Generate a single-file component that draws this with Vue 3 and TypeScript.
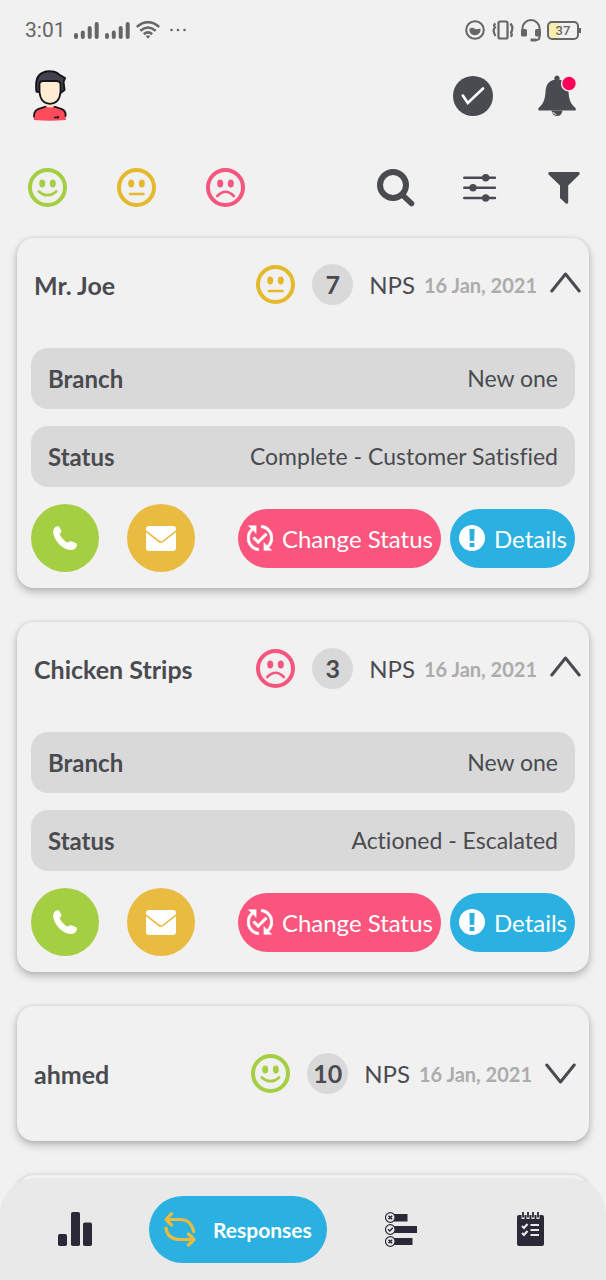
<script setup lang="ts">
import { ref } from 'vue'

type Mood = 'happy' | 'neutral' | 'sad'

interface FeedbackResponse {
  id: number
  name: string
  mood: Mood
  score: number
  date: string
  branch: string
  status: string
  open: boolean
}

const moods: Mood[] = ['happy', 'neutral', 'sad']

const responses = ref<FeedbackResponse[]>([
  { id: 1, name: 'Mr. Joe', mood: 'neutral', score: 7, date: '16 Jan, 2021', branch: 'New one', status: 'Complete - Customer Satisfied', open: true },
  { id: 2, name: 'Chicken Strips', mood: 'sad', score: 3, date: '16 Jan, 2021', branch: 'New one', status: 'Actioned - Escalated', open: true },
  { id: 3, name: 'ahmed', mood: 'happy', score: 10, date: '16 Jan, 2021', branch: 'New one', status: 'Complete - Customer Satisfied', open: false },
])
</script>

<template>
  <div class="screen">
    <svg class="sprite" aria-hidden="true">
      <symbol id="face-happy" viewBox="0 0 39 39">
        <circle cx="19.500" cy="19.500" r="17.500" fill="none" stroke="currentColor" stroke-width="4" />
        <ellipse cx="14.200" cy="15.500" rx="3" ry="3.900" fill="currentColor" />
        <ellipse cx="24.800" cy="15.500" rx="3" ry="3.900" fill="currentColor" />
        <path d="M10.800 23.400Q19.500 31 28.200 23.400" fill="none" stroke="currentColor" stroke-width="2.600" stroke-linecap="round" />
      </symbol>
      <symbol id="face-neutral" viewBox="0 0 39 39">
        <circle cx="19.500" cy="19.500" r="17.500" fill="none" stroke="currentColor" stroke-width="4" />
        <ellipse cx="14.200" cy="15.500" rx="3" ry="3.900" fill="currentColor" />
        <ellipse cx="24.800" cy="15.500" rx="3" ry="3.900" fill="currentColor" />
        <path d="M13 26H26.500" fill="none" stroke="currentColor" stroke-width="2.600" stroke-linecap="round" />
      </symbol>
      <symbol id="face-sad" viewBox="0 0 39 39">
        <circle cx="19.500" cy="19.500" r="17.500" fill="none" stroke="currentColor" stroke-width="4" />
        <ellipse cx="14.200" cy="15.500" rx="3" ry="3.900" fill="currentColor" />
        <ellipse cx="24.800" cy="15.500" rx="3" ry="3.900" fill="currentColor" />
        <path d="M11.300 28Q19.500 19.500 27.800 28" fill="none" stroke="currentColor" stroke-width="2.600" stroke-linecap="round" />
      </symbol>
      <symbol id="signal" viewBox="0 0 25 17">
        <path d="M2 13V15M8.800 10.500V15M15.700 6V15M22.700 2V15" fill="none" stroke="currentColor" stroke-width="4" stroke-linecap="round" />
      </symbol>
    </svg>

    <header class="status-bar">
      <div class="status-group">
        <span class="clock">3:01</span>
        <svg class="signal" aria-hidden="true"><use href="#signal" /></svg>
        <svg class="signal" aria-hidden="true"><use href="#signal" /></svg>
        <svg class="wifi" viewBox="0 0 24 18" aria-hidden="true">
          <g fill="none" stroke="currentColor" stroke-width="2.600">
            <path d="M.8 6Q12-3.500 23.200 6" />
            <path d="M4.300 9.700Q12 3.300 19.700 9.700" />
            <path d="M7.800 13.200Q12 9.700 16.200 13.200" />
          </g>
          <path d="M9.800 15Q12 13.600 14.200 15L12 17.800Z" fill="currentColor" />
        </svg>
        <svg class="more" viewBox="0 0 16 4" fill="currentColor" aria-hidden="true">
          <circle cx="1.500" cy="2" r="1.300" /><circle cx="8" cy="2" r="1.300" /><circle cx="14.500" cy="2" r="1.300" />
        </svg>
      </div>
      <div class="status-group">
        <svg class="eye" viewBox="0 0 20 20" aria-hidden="true">
          <circle cx="10" cy="10" r="8.800" fill="none" stroke="currentColor" stroke-width="2" />
          <path d="M4.500 9C6.500 7 8.500 8 10.500 9.200C12.500 9.200 14 8.500 15.500 8.800C16 12.500 13.500 15.200 10 15.200C6.500 15.200 4 12.500 4.500 9Z" fill="currentColor" />
        </svg>
        <svg class="vibrate" viewBox="0 0 24 20" fill="none" stroke="currentColor" stroke-width="2.200" aria-hidden="true">
          <rect x="7.500" y="1.500" width="9" height="17" rx="1.500" />
          <path d="M4.500 3.500Q2 5 4 7.500Q1 10.500 4.500 16M19.500 16.500Q22 15 20 12.500Q23 8 19.500 3.500" />
        </svg>
        <svg class="headset" viewBox="0 0 20 24" aria-hidden="true">
          <path d="M1.500 14V10.500A8.500 8.500 0 0 1 18.500 10.500V19Q18.500 22 15 22H11" fill="none" stroke="currentColor" stroke-width="2" />
          <rect x="0" y="11" width="6" height="7.500" rx="1.500" fill="currentColor" />
          <rect x="14" y="11" width="6" height="7.500" rx="1.500" fill="currentColor" />
          <rect x="9.500" y="20.500" width="6" height="3" rx="1" fill="currentColor" />
        </svg>
        <span class="battery">37</span>
      </div>
    </header>

    <div class="top-bar">
      <button class="icon-button" type="button" aria-label="Profile">
        <svg class="avatar" viewBox="0 0 36 52" aria-hidden="true">
          <path d="M2 50Q-.5 40 9 38L14 36.500H22L27 38Q36.500 40 33.500 47L34 50Q18 51.500 2 50Z" fill="#ff4b5c" />
          <path d="M2 46.500Q1.500 39.800 9 38.200L14 36.500M22 36.500L27 38.200Q34.500 39.800 33.500 46" fill="none" stroke="#15151c" stroke-width="1.800" stroke-linecap="round" />
          <path d="M14 31H22V36.500Q18 38.500 14 36.500Z" fill="#ffdfba" />
          <path d="M6.500 22L4.500 21.500Q3 10 7 5.500Q11 .8 18.500 1.200Q24 1.200 27 4.500L33 8.200L31.500 12L32.500 20L28.500 23Z" fill="#41424d" stroke="#15151c" stroke-width="2" stroke-linejoin="round" />
          <path d="M7.500 13.500Q8 11 11 11H24.500Q28 11 28.500 14V22Q27.500 33.500 18 33.800Q8.500 33.500 7.500 22Z" fill="#ffecd3" stroke="#15151c" stroke-width="1.800" />
          <path d="M22 47.500H27M26 46V48.500" stroke="#15151c" stroke-width="1.600" />
        </svg>
      </button>
      <div class="top-actions">
        <button class="icon-button" type="button" aria-label="Mark all as done">
          <svg class="done" viewBox="0 0 40 40" aria-hidden="true">
            <circle cx="20" cy="20" r="20" fill="currentColor" />
            <path d="M9.800 19.500L14.800 27L30 12.500" fill="none" stroke="#fff" stroke-width="2.600" stroke-linecap="round" />
          </svg>
        </button>
        <button class="icon-button" type="button" aria-label="Notifications">
          <svg class="bell" viewBox="0 0 40 42" aria-hidden="true">
            <path d="M13.500 35.500H24.500Q23.500 41 19 41Q14.500 41 13.500 35.500Z" fill="currentColor" />
            <path d="M14.800 37Q16 39.500 18.500 39.500" fill="none" stroke="#f1f1f1" stroke-width="1.100" />
            <path d="M16.800 4.500A2.600 2.600 0 1 1 21.200 4.500C28 6 30.300 11 30.500 17C31 25 33 29 37 32.500Q38.500 34 37.500 35.500H.7Q-.3 34 1 32.500C5 29 7 25 7.500 17C7.700 11 10 6 16.800 4.500Z" fill="currentColor" />
            <circle cx="31" cy="8.500" r="7.400" fill="#ff0059" stroke="#f1f1f1" stroke-width="1.400" />
          </svg>
        </button>
      </div>
    </div>

    <div class="tools">
      <div class="mood-filters">
        <button v-for="mood in moods" :key="mood" class="icon-button" type="button" :aria-label="`Show ${mood} responses`">
          <svg class="face" :class="mood" aria-hidden="true"><use :href="`#face-${mood}`" /></svg>
        </button>
      </div>
      <div class="list-tools">
        <button class="icon-button tool" type="button" aria-label="Search">
          <svg class="search" viewBox="0 0 38 38" fill="none" stroke="currentColor" aria-hidden="true">
            <circle cx="16" cy="16" r="13" stroke-width="6" />
            <path d="M26 26.500L34.500 34.500" stroke-width="5.600" stroke-linecap="round" />
          </svg>
        </button>
        <button class="icon-button tool" type="button" aria-label="Adjust view">
          <svg class="sliders" viewBox="0 0 34 28" fill="currentColor" stroke="currentColor" aria-hidden="true">
            <path d="M1.200 3.700H32M1.200 13.800H32M1.200 24H32" stroke-width="2.400" stroke-linecap="round" />
            <g stroke="none"><circle cx="22.700" cy="3.700" r="3.700" /><circle cx="10" cy="13.800" r="3.700" /><circle cx="22.700" cy="24" r="3.700" /></g>
          </svg>
        </button>
        <button class="icon-button tool" type="button" aria-label="Filter">
          <svg class="funnel" viewBox="0 0 32 32" fill="currentColor" aria-hidden="true">
            <path d="M1.200 0H30.800Q32.500 .8 31 3L20.200 13.500V30.500Q19.500 32.500 17.800 31.500L12 26V13.500L1 3Q-.5 .8 1.200 0Z" />
          </svg>
        </button>
      </div>
    </div>

    <main class="list">
      <article v-for="item in responses" :key="item.id" class="card" :class="{ open: item.open }">
        <div class="card-head">
          <h2 class="name">{{ item.name }}</h2>
          <svg class="face" :class="item.mood" role="img" :aria-label="item.mood"><use :href="`#face-${item.mood}`" /></svg>
          <span class="score">{{ item.score }}</span>
          <span class="metric">NPS</span>
          <time class="date">{{ item.date }}</time>
          <button class="icon-button" type="button" :aria-expanded="item.open" aria-label="Toggle details" @click="item.open = !item.open">
            <svg class="chevron" viewBox="0 0 31 21" aria-hidden="true">
              <path :d="item.open ? 'M1.800 19L15.500 2L29.200 19' : 'M1.800 2L15.500 19L29.200 2'" fill="none" stroke="currentColor" stroke-width="3" stroke-linecap="round" stroke-linejoin="round" />
            </svg>
          </button>
        </div>
        <template v-if="item.open">
          <dl class="facts">
            <div class="fact"><dt>Branch</dt><dd>{{ item.branch }}</dd></div>
            <div class="fact"><dt>Status</dt><dd>{{ item.status }}</dd></div>
          </dl>
          <div class="actions">
            <div class="contact">
              <button class="round call" type="button" aria-label="Call">
                <svg class="phone" viewBox="0 0 24 24" fill="currentColor" aria-hidden="true">
                  <path d="M1 2.500C2.500 .5 4.800-.2 6 .6L8.300 4.500C8.800 6 7.500 7 6.800 7.700C7.300 10.500 11.500 15.200 14.800 16.800C16 15.500 17.500 15 18.700 15.400L22.900 17C24.500 18.200 24.200 20.500 22.300 22.500C18.500 25.500 12.500 23.800 7.500 19.500C2.500 14.500-1.500 7.500 1 2.500Z" />
                </svg>
              </button>
              <button class="round mail" type="button" aria-label="Email">
                <svg class="envelope" viewBox="0 0 30 25" aria-hidden="true">
                  <rect width="30" height="25" rx="3" fill="currentColor" />
                  <path d="M-1 4.500L12.500 15Q15 17 17.500 15L31 4.500" fill="none" stroke="#e9bb40" stroke-width="1.600" />
                </svg>
              </button>
            </div>
            <button class="pill change" type="button">
              <svg class="pill-icon" viewBox="2 2 20 20" fill="currentColor" stroke="currentColor" stroke-width=".4" aria-hidden="true">
                <path d="M17.660 9.530l-7.070 7.070-4.240-4.240 1.410-1.410 2.830 2.830 5.660-5.660 1.410 1.410zM4 12c0-2.330 1.020-4.420 2.620-5.880L9 8.500v-6H3l2.200 2.200C3.240 6.520 2 9.110 2 12c0 5.190 3.950 9.450 9 9.950v-2.020c-3.940-.49-7-3.860-7-7.930zm18 0c0-5.190-3.950-9.450-9-9.950v2.020c3.940.49 7 3.860 7 7.930 0 2.330-1.020 4.420-2.620 5.880L15 15.500v6h6l-2.200-2.200c1.960-1.820 3.200-4.410 3.200-7.300z" />
              </svg>
              Change Status
            </button>
            <button class="pill details" type="button">
              <svg class="pill-icon" viewBox="0 0 26 26" aria-hidden="true">
                <circle cx="13" cy="13" r="13" fill="currentColor" />
                <path d="M10.400 4H15.600L15.200 16H10.800ZM10.600 18H15.400V22H10.600Z" fill="#2ab1e1" />
              </svg>
              Details
            </button>
          </div>
        </template>
      </article>
      <article class="card" aria-hidden="true"><div class="card-head"></div></article>
    </main>

    <nav class="tab-bar">
      <a class="tab" href="#dashboard" aria-label="Dashboard">
        <svg class="bars" viewBox="0 0 34 34" fill="currentColor" aria-hidden="true">
          <rect y="22" width="9" height="12" rx="1.800" /><rect x="13" width="9" height="34" rx="1.800" /><rect x="25" y="10.500" width="9" height="23.500" rx="1.800" />
        </svg>
      </a>
      <a class="tab active" href="#responses" aria-current="page">
        <span class="tab-pill">
          <svg class="cycle" viewBox="0 0 32 35" fill="none" stroke="currentColor" stroke-width="3.200" stroke-linecap="round" stroke-linejoin="round" aria-hidden="true">
            <path d="M7.500 1.700L2 7.500L7.500 13M2.500 7.500H17Q27 8 29.700 19.500" />
            <path d="M24.500 22L30 27.500L24.500 33M29.500 27.500H15Q3.500 27 2 16" />
          </svg>
          Responses
        </span>
      </a>
      <a class="tab" href="#surveys" aria-label="Surveys">
        <svg class="poll" viewBox="0 0 32 35" aria-hidden="true">
          <path d="M9 2H22.500V9.500H9ZM9 14H32V21H9ZM9 26H27.500V33H9Z" fill="currentColor" />
          <g fill="#e9e9e9" stroke="currentColor" stroke-width="1.200">
            <circle cx="5.300" cy="5.500" r="4.800" /><circle cx="5.300" cy="17.500" r="4.800" /><circle cx="5.300" cy="29.500" r="4.800" />
          </g>
          <g fill="none" stroke="currentColor" stroke-width="1.500">
            <path d="M3.500 3.700L7.100 7.300M7.100 3.700L3.500 7.300M3 17.300L4.800 19L7.800 15.800M3.500 27.700L7.100 31.300M7.100 27.700L3.500 31.300" />
          </g>
        </svg>
      </a>
      <a class="tab" href="#tasks" aria-label="Tasks">
        <svg class="notepad" viewBox="0 0 27 35" aria-hidden="true">
          <rect y="3" width="27" height="31" rx="2" fill="currentColor" />
          <path d="M6 0V7M11 0V7M16 0V7M21 0V7" stroke="#e9e9e9" stroke-width="3" />
          <path d="M6 0V5.500M11 0V5.500M16 0V5.500M21 0V5.500" stroke="currentColor" stroke-width="1.800" />
          <path d="M5 14L7 16L10.500 12M5 21L7 23L10.500 19" fill="none" stroke="#e9e9e9" stroke-width="2.200" />
          <path d="M13.500 13H22M13.500 18H22M13.500 23H22" stroke="#e9e9e9" stroke-width="2" />
        </svg>
      </a>
    </nav>
  </div>
</template>

<style>
body {
  margin: 0;
  background: #f1f1f1;
}
</style>

<style scoped>
.screen {
  display: flex;
  flex-direction: column;
  height: 100vh;
  overflow: hidden;
  background: #f1f1f1;
  color: #4a4b50;
  font-family: Lato, "Liberation Sans", sans-serif;
  font-variant-ligatures: no-common-ligatures;
}
.sprite {
  display: none;
}
svg {
  display: block;
  flex: none;
}
button {
  font: inherit;
  border: 0;
  cursor: pointer;
}
.icon-button {
  padding: 0;
  background: none;
  color: inherit;
}

.status-bar {
  display: flex;
  flex: none;
  justify-content: space-between;
  align-items: center;
  height: 60px;
  padding: 0 27px 0 25px;
  color: #666;
  font-family: Roboto, sans-serif;
}
.status-group {
  display: flex;
  align-items: center;
  gap: 6px;
}
.clock {
  font-size: 21px;
  line-height: 24px;
  margin-right: 2px;
}
.signal {
  width: 25px;
  height: 17px;
}
.wifi {
  width: 24px;
  height: 18px;
}
.more {
  width: 16px;
  height: 4px;
  margin-left: 4px;
}
.eye {
  width: 20px;
  height: 20px;
}
.vibrate {
  width: 24px;
  height: 20px;
}
.headset {
  width: 20px;
  height: 24px;
}
.battery {
  position: relative;
  width: 28px;
  border: 2px solid #666;
  border-radius: 5px;
  background: linear-gradient(90deg, #f6eeb0 35%, transparent 35%);
  font-size: 13px;
  font-weight: 500;
  line-height: 15px;
  text-align: center;
}
.battery::after {
  content: "";
  position: absolute;
  top: 5px;
  right: -4px;
  width: 2px;
  height: 5px;
  background: #666;
}

.top-bar {
  display: flex;
  flex: none;
  justify-content: space-between;
  align-items: center;
  height: 72px;
  padding: 0 28px 0 32px;
}
.top-actions {
  display: flex;
  align-items: center;
  gap: 45px;
}
.avatar {
  width: 36px;
  height: 52px;
}
.done {
  width: 40px;
  height: 40px;
}
.bell {
  width: 40px;
  height: 42px;
}

.tools {
  display: flex;
  flex: none;
  justify-content: space-between;
  align-items: center;
  padding: 36px 23px 31px 28px;
}
.mood-filters {
  display: flex;
  gap: 50px;
}
.list-tools {
  display: flex;
  align-items: center;
  gap: 46px;
}
.tool {
  display: grid;
  place-items: center;
  width: 38px;
  height: 38px;
}
.face {
  width: 39px;
  height: 39px;
}
.happy {
  color: #a5cf43;
}
.neutral {
  color: #e5b92c;
}
.sad {
  color: #f5567d;
}
.search {
  width: 38px;
  height: 38px;
}
.sliders {
  width: 34px;
  height: 28px;
}
.funnel {
  width: 32px;
  height: 32px;
}

.list {
  display: flex;
  flex: none;
  flex-direction: column;
  gap: 34px;
  padding: 0 17px;
}
.card {
  padding: 0 14px;
  border-radius: 17px;
  background: #f1f1f1;
  box-shadow: 0 4px 8px rgba(0, 0, 0, 0.24), 0 0 4px rgba(0, 0, 0, 0.1);
}
.card.open {
  padding-bottom: 16px;
}
.card-head {
  display: flex;
  align-items: center;
  height: 41px;
  margin-right: -1px;
  padding: 47px 0 47px 3px;
}
.open .card-head {
  margin-right: -6px;
  padding: 26px 0 43px 3px;
}
.name {
  flex: 1;
  margin: 0;
  font-size: 25px;
  font-weight: 700;
  line-height: 30px;
}
.score {
  width: 41px;
  margin: 0 16px 0 17px;
  border-radius: 50%;
  background: #d9d9d9;
  font-size: 25px;
  font-weight: 700;
  line-height: 41px;
  text-align: center;
}
.metric {
  font-size: 24px;
  line-height: 30px;
}
.date {
  margin: 0 13px 0 9px;
  color: #acacac;
  font-size: 20px;
  font-weight: 700;
  line-height: 30px;
}
.chevron {
  width: 31px;
  height: 21px;
}
.open .chevron {
  margin-bottom: 4px;
}

.facts {
  display: flex;
  flex-direction: column;
  gap: 17px;
  margin: 0 0 17px;
}
.fact {
  display: flex;
  justify-content: space-between;
  padding: 0 17px;
  border-radius: 17px;
  background: #d9d9d9;
  font-size: 24px;
  line-height: 61px;
}
dt {
  font-weight: 700;
}
dd {
  margin: 0;
  font-size: 23px;
}

.actions {
  display: flex;
  align-items: center;
  gap: 9px;
}
.contact {
  display: flex;
  flex: 1;
  gap: 28px;
}
.round {
  display: grid;
  place-items: center;
  width: 68px;
  height: 68px;
  padding: 0;
  border-radius: 50%;
  color: #fff;
}
.call {
  background: #a5cf43;
}
.mail {
  background: #e9bb40;
}
.phone {
  width: 24px;
  height: 24px;
}
.envelope {
  width: 30px;
  height: 25px;
}
.pill {
  display: flex;
  align-items: center;
  gap: 9px;
  height: 59px;
  padding: 0 8px 0 9px;
  border-radius: 30px;
  color: #fff;
  font-size: 24px;
  white-space: nowrap;
}
.pill-icon {
  width: 26px;
  height: 26px;
}
.change {
  background: #f9557d;
}
.details {
  background: #2ab1e1;
}

.tab-bar {
  position: fixed;
  right: 0;
  bottom: 0;
  left: 0;
  display: flex;
  align-items: center;
  height: 102px;
  padding: 0 10px;
  box-sizing: border-box;
  border-radius: 36px 36px 0 0;
  background: #e9e9e9;
}
.tab {
  display: flex;
  flex: 2 0 0;
  justify-content: center;
  color: #2b2937;
  text-decoration: none;
}
.tab.active {
  flex-grow: 3;
}
.tab-pill {
  display: flex;
  align-items: center;
  gap: 17px;
  height: 67px;
  padding: 0 15px;
  border-radius: 34px;
  background: #2ab1e1;
  color: #fff;
  font-size: 21px;
  font-weight: 700;
}
.bars {
  width: 34px;
  height: 34px;
}
.cycle {
  width: 32px;
  height: 35px;
  color: #e9bb40;
}
.poll {
  width: 32px;
  height: 35px;
}
.notepad {
  width: 27px;
  height: 35px;
}
</style>
